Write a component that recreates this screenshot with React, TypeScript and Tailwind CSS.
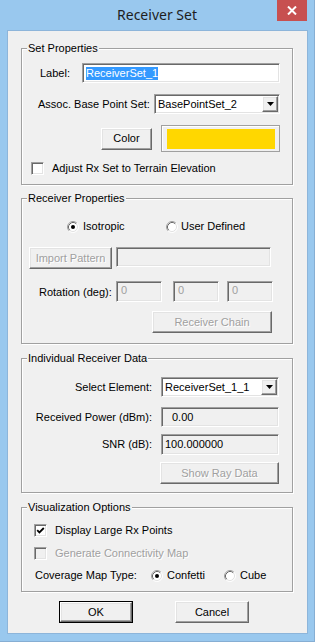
import React from "react";

const sunken =
  "border border-t-[#a0a0a0] border-l-[#a0a0a0] border-r-white border-b-white shadow-[inset_1px_1px_0_#696969,inset_-1px_-1px_0_#e3e3e3]";
const raised =
  "border border-t-white border-l-white border-r-[#696969] border-b-[#696969] shadow-[inset_-1px_-1px_0_#a0a0a0,inset_1px_1px_0_#e3e3e3] bg-[#f0f0f0]";

function Btn({
  className = "",
  disabled = false,
  children,
}: {
  className?: string;
  disabled?: boolean;
  children: React.ReactNode;
}) {
  return (
    <div
      className={`${raised} flex items-center justify-center ${
        disabled ? "text-[#a0a0a0] [text-shadow:1px_1px_0_#fff]" : "text-black"
      } ${className}`}
    >
      {children}
    </div>
  );
}

function Radio({ checked = false }: { checked?: boolean }) {
  return (
    <svg width="12" height="12" viewBox="0 0 12 12" className="shrink-0">
      <circle cx="6" cy="6" r="5" fill="#fff" />
      <path d="M 2.11 9.89 A 5.5 5.5 0 0 1 9.89 2.11" fill="none" stroke="#a0a0a0" strokeWidth="1" />
      <path d="M 9.89 2.11 A 5.5 5.5 0 0 1 2.11 9.89" fill="none" stroke="#ffffff" strokeWidth="1" />
      <path d="M 2.82 9.18 A 4.5 4.5 0 0 1 9.18 2.82" fill="none" stroke="#696969" strokeWidth="1" />
      <path d="M 9.18 2.82 A 4.5 4.5 0 0 1 2.82 9.18" fill="none" stroke="#e3e3e3" strokeWidth="1" />
      {checked && <circle cx="6" cy="6" r="2" fill="#000" />}
    </svg>
  );
}

function Check({ checked = false, disabled = false }: { checked?: boolean; disabled?: boolean }) {
  return (
    <div
      className={`${sunken} w-[13px] h-[13px] shrink-0 flex items-center justify-center ${
        disabled ? "bg-[#f0f0f0]" : "bg-white"
      }`}
    >
      {checked && (
        <svg width="9" height="9" viewBox="0 0 9 9">
          <path d="M1.2 4.2 L3.4 6.4 L7.8 2" fill="none" stroke="#000" strokeWidth="1.8" />
        </svg>
      )}
    </div>
  );
}

function Combo({ value, className = "" }: { value: string; className?: string }) {
  return (
    <div className={`${sunken} bg-white h-[20px] p-[1px] flex items-stretch ${className}`}>
      <div className="flex-1 flex items-center pl-[2px] text-black">{value}</div>
      <div className={`${raised} w-[16px] flex items-center justify-center`}>
        <svg width="7" height="4" viewBox="0 0 7 4">
          <polygon points="0,0 7,0 3.5,4" fill="#000" />
        </svg>
      </div>
    </div>
  );
}

function Group({
  title,
  className = "",
  children,
}: {
  title: string;
  className?: string;
  children: React.ReactNode;
}) {
  return (
    <fieldset
      className={`ml-[13px] w-[272px] border border-[#a0a0a0] shadow-[inset_1px_1px_0_#fff,1px_1px_0_#fff] ${className}`}
    >
      <legend className="ml-[5px] px-[1px] leading-[14px] bg-[#f0f0f0] text-black">{title}</legend>
      {children}
    </fieldset>
  );
}

export default function App() {
  return (
    <div className="w-[315px] h-[642px] bg-[#99c8ee] border-r border-b border-r-[#86aed3] border-b-[#86aed3] flex flex-col font-['Liberation_Sans',Arial,sans-serif] text-[11px] text-black">
      {/* Title bar */}
      <div className="h-[30px] shrink-0 grid grid-cols-[1fr_auto_1fr] items-start">
        <div />
        <div className="pt-[5px] font-['Noto_Sans',sans-serif] text-[14px] leading-[19px] text-[#1e1e1e]">
          Receiver Set
        </div>
        <div className="justify-self-end mr-[7px] w-[30px] h-[21px] bg-[#c75050] flex items-center justify-center">
          <svg width="10" height="9" viewBox="0 0 10 9">
            <path d="M1 0.5 L9 8.5 M9 0.5 L1 8.5" stroke="#fff" strokeWidth="2" />
          </svg>
        </div>
      </div>

      {/* Client area */}
      <div className="ml-[7px] mr-[6px] mb-[7px] flex-1 border border-[#8db5da] bg-[#f0f0f0] flex flex-col">
        {/* Set Properties */}
        <Group title="Set Properties" className="mt-[10px] pb-[9px]">
          <div className="mt-[8px] flex items-center h-[20px]">
            <span className="pl-[18px] w-[60px] shrink-0">Label:</span>
            <div className={`${sunken} bg-white w-[198px] h-[20px] p-[1px] pl-[3px] flex items-center`}>
              <span className="bg-[#3399ff] text-white leading-[13px]">ReceiverSet_1</span>
            </div>
          </div>
          <div className="mt-[11px] flex items-center h-[20px]">
            <span className="pl-[16px] w-[132px] shrink-0">Assoc. Base Point Set:</span>
            <Combo value="BasePointSet_2" className="w-[126px]" />
          </div>
          <div className="mt-[11px] flex items-center h-[27px]">
            <Btn className="ml-[79px] w-[51px] h-[22px]">Color</Btn>
            <div className="ml-[9px] w-[119px] h-[27px] border border-[#a0a0a0] shadow-[inset_1px_1px_0_#fff] pl-[5px] pr-[4px] pt-[3px] pb-[2px] flex">
              <div className="flex-1 bg-[#ffd700]" />
            </div>
          </div>
          <div className="mt-[10px] flex items-center h-[13px] pl-[9px]">
            <Check />
            <span className="ml-[8px]">Adjust Rx Set to Terrain Elevation</span>
          </div>
        </Group>

        {/* Receiver Properties */}
        <Group title="Receiver Properties" className="mt-[6px] pb-[10px]">
          <div className="mt-[15px] flex items-center h-[13px] pl-[45px]">
            <div className="w-[99px] flex items-center">
              <Radio checked />
              <span className="ml-[4px]">Isotropic</span>
            </div>
            <div className="flex items-center">
              <Radio />
              <span className="ml-[3px]">User Defined</span>
            </div>
          </div>
          <div className="mt-[14px] flex items-start pl-[7px]">
            <Btn disabled className="w-[83px] h-[22px]">
              Import Pattern
            </Btn>
            <div className={`${sunken} ml-[4px] w-[155px] h-[20px] bg-[#f0f0f0]`} />
          </div>
          <div className="mt-[12px] flex items-center h-[21px] pl-[17px]">
            <span className="w-[77px] shrink-0 pt-[2px]">Rotation (deg):</span>
            <div className={`${sunken} w-[46px] h-[21px] pl-[4px] pt-[2px] text-[#a0a0a0] leading-[13px]`}>0</div>
            <div className={`${sunken} ml-[11px] w-[46px] h-[21px] pl-[4px] pt-[2px] text-[#a0a0a0] leading-[13px]`}>0</div>
            <div className={`${sunken} ml-[8px] w-[46px] h-[21px] pl-[4px] pt-[2px] text-[#a0a0a0] leading-[13px]`}>0</div>
          </div>
          <div className="mt-[9px] pl-[130px] flex">
            <Btn disabled className="w-[120px] h-[22px]">
              Receiver Chain
            </Btn>
          </div>
        </Group>

        {/* Individual Receiver Data */}
        <Group title="Individual Receiver Data" className="mt-[7px] pb-[8px]">
          <div className="mt-[12px] flex items-center h-[20px]">
            <span className="w-[130px] shrink-0 text-right">Select Element:</span>
            <Combo value="ReceiverSet_1_1" className="ml-[9px] w-[118px]" />
          </div>
          <div className="mt-[10px] flex items-center h-[20px]">
            <span className="w-[130px] shrink-0 text-right">Received Power (dBm):</span>
            <div className={`${sunken} ml-[9px] w-[118px] h-[20px] bg-[#f0f0f0] flex items-center pl-[10px]`}>0.00</div>
          </div>
          <div className="mt-[7px] flex items-center h-[21px]">
            <span className="w-[130px] shrink-0 text-right">SNR (dB):</span>
            <div className={`${sunken} ml-[9px] w-[118px] h-[21px] bg-[#f0f0f0] flex items-center pl-[3px]`}>100.000000</div>
          </div>
          <div className="mt-[7px] pl-[138px] flex">
            <Btn disabled className="w-[119px] h-[22px]">
              Show Ray Data
            </Btn>
          </div>
        </Group>

        {/* Visualization Options */}
        <Group title="Visualization Options" className="mt-[7px] pb-[9px]">
          <div className="mt-[10px] flex items-center h-[13px] pl-[12px]">
            <Check checked />
            <span className="ml-[8px]">Display Large Rx Points</span>
          </div>
          <div className="mt-[10px] flex items-center h-[13px] pl-[12px]">
            <Check disabled />
            <span className="ml-[8px] text-[#a0a0a0] [text-shadow:1px_1px_0_#fff]">Generate Connectivity Map</span>
          </div>
          <div className="mt-[9px] flex items-center h-[13px] pl-[13px]">
            <span className="w-[116px] shrink-0">Coverage Map Type:</span>
            <div className="w-[73px] flex items-center">
              <Radio checked />
              <span className="ml-[4px]">Confetti</span>
            </div>
            <div className="flex items-center">
              <Radio />
              <span className="ml-[4px]">Cube</span>
            </div>
          </div>
        </Group>

        {/* Buttons */}
        <div className="mt-[9px] flex pl-[51px]">
          <div className="w-[74px] h-[22px] border border-[#000] flex">
            <Btn className="flex-1">OK</Btn>
          </div>
          <Btn className="ml-[42px] w-[74px] h-[22px]">Cancel</Btn>
        </div>
      </div>
    </div>
  );
}
